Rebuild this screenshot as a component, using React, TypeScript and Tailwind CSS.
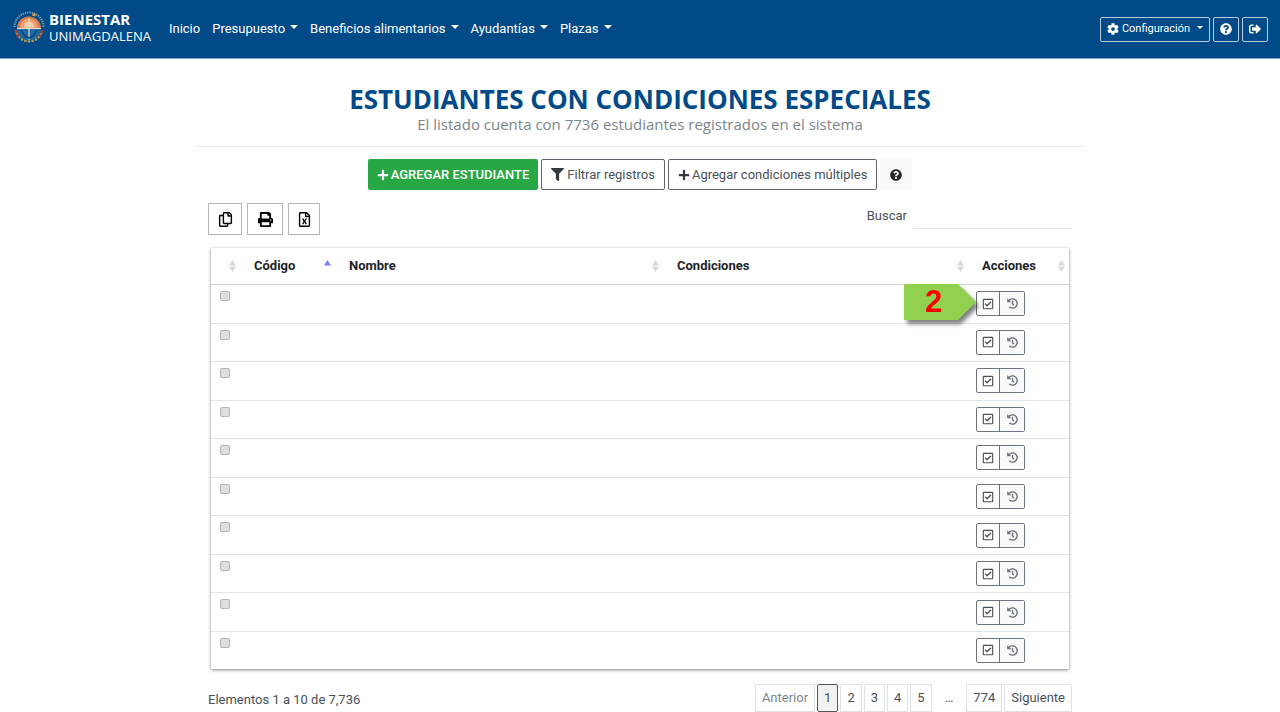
import type { ReactNode } from 'react';
import {
  FaCog,
  FaFilter,
  FaHistory,
  FaPlus,
  FaPrint,
  FaQuestionCircle,
  FaRegCheckSquare,
  FaRegCopy,
  FaRegFileExcel,
  FaSignOutAlt,
} from 'react-icons/fa';

const rows = Array.from({ length: 10 }, (_, i) => i + 1);

function Caret() {
  return (
    <span
      aria-hidden="true"
      className="mb-1 h-0 w-0 border-x-4 border-t-4 border-x-transparent border-t-current"
    />
  );
}

function Crest() {
  return (
    <svg viewBox="0 0 34 34" className="h-[34px] w-[34px]" aria-hidden="true">
      <path d="M2.500 16a14.500 14.500 0 0 1 29 0" fill="none" stroke="#8fa0b0" strokeWidth="2" strokeDasharray="1.2 1.1" />
      <path d="M5 22a13 13 0 0 0 24 0" fill="none" stroke="#c9a14a" strokeWidth="3" strokeDasharray="2.2 1.300" />
      <path d="M3.500 19a14 14 0 0 0 4 7M30.500 19a14 14 0 0 1-4 7" stroke="#b23a30" strokeWidth="2.600" strokeDasharray="3 1.500" fill="none" />
      <circle cx="17" cy="17.500" r="12" fill="#1b6aa3" />
      <path d="M5 17.500a12 12 0 0 1 24 0z" fill="#d97b4c" />
      <path d="M8 17a9 9.500 0 0 1 18 0z" fill="#ee9f6f" />
      <path d="M12 16.500a5 6 0 0 1 10 0z" fill="#f8cfae" />
      <path d="M5 17.500h24M17 7v22" stroke="#e9dcc4" strokeWidth="1.200" />
      <path d="M9 19c2 5 5 7 8 8 3-1 6-3 8-8" fill="none" stroke="#0a4379" strokeWidth="1.500" />
      <path d="M21 2l3 1-1 2.500-3-1z" fill="#e39a35" />
    </svg>
  );
}

function NavItem({ children, menu = true }: { children: ReactNode; menu?: boolean }) {
  return menu ? (
    <button type="button" className="flex items-center gap-[5px]">
      {children}
      <Caret />
    </button>
  ) : (
    <a href="#inicio">{children}</a>
  );
}

function Sort({ active = false }: { active?: boolean }) {
  return (
    <svg viewBox="0 0 7 12" className="h-3 w-[7px] shrink-0" aria-hidden="true">
      {active ? (
        <path d="M3.500 0 7 5.500H0z" fill="#7b80e6" />
      ) : (
        <path d="M3.500 0 7 5.500H0zM0 6.500h7l-3.500 5.500z" fill="#d9d9d9" />
      )}
    </svg>
  );
}

function Heading({ children, active }: { children?: ReactNode; active?: boolean }) {
  return (
    <th scope="col" className="border-b border-[#cfcfcf] pr-2 pl-2.5 text-left font-bold last:pr-1">
      <div className="flex items-center justify-between">
        <span>{children}</span>
        <Sort active={active} />
      </div>
    </th>
  );
}

function PageButton({ children, current = false }: { children: ReactNode; current?: boolean }) {
  return (
    <button
      type="button"
      aria-current={current ? 'page' : undefined}
      className={
        current
          ? 'h-7 rounded-xs border border-[#555] bg-[#f2f2f2] px-1.5'
          : 'h-7 border border-[#dee2e6] bg-white px-1.5'
      }
    >
      {children}
    </button>
  );
}

export default function App() {
  return (
    <div className="bg-white font-['Roboto',sans-serif] text-[13px] text-[#495057]">
      <header className="flex h-[59px] items-center border-b border-[#7fa3c2] bg-[#004a87] px-3 text-white">
        <a href="#inicio" className="mb-0.5 flex items-center gap-[3px]">
          <Crest />
          <span className="font-['Open_Sans',sans-serif] text-[13px] leading-[17px]">
            <strong className="block text-[15px]">BIENESTAR</strong>
            UNIMAGDALENA
          </span>
        </a>
        <nav className="ml-[18px] flex items-center gap-3">
          <NavItem menu={false}>Inicio</NavItem>
          <NavItem>Presupuesto</NavItem>
          <NavItem>Beneficios alimentarios</NavItem>
          <NavItem>Ayudantías</NavItem>
          <NavItem>Plazas</NavItem>
        </nav>
        <div className="ml-auto flex gap-[3px] text-[11px]">
          <button type="button" className="flex h-[25px] items-center gap-[3px] rounded-xs border border-[#b9cbdc] px-1.5">
            <FaCog className="size-3" />
            Configuración
            <span aria-hidden="true" className="mb-1 ml-1 border-x-[3px] border-t-[3px] border-x-transparent border-t-current" />
          </button>
          <button type="button" aria-label="Ayuda" className="flex h-[25px] w-[26px] items-center justify-center rounded-xs border border-[#b9cbdc]">
            <FaQuestionCircle className="size-3" />
          </button>
          <button type="button" aria-label="Salir" className="flex h-[25px] w-[26px] items-center justify-center rounded-xs border border-[#b9cbdc]">
            <FaSignOutAlt className="size-3" />
          </button>
        </div>
      </header>

      <main className="mx-auto max-w-[888px] pt-6">
        <div className="border-b border-[#e8e8e8] pb-3 text-center font-['Open_Sans',sans-serif]">
          <h1 className="text-[26px] leading-8 font-bold text-[#004a87]">ESTUDIANTES CON CONDICIONES ESPECIALES</h1>
          <p className="text-[15px] leading-[19px] text-[#7d858c]">
            El listado cuenta con 7736 estudiantes registrados en el sistema
          </p>
        </div>

        <div className="mt-3 flex h-[31px] justify-center gap-[3px]">
          <button type="button" className="flex items-center gap-0.5 rounded-xs bg-[#28a745] px-[9px] font-medium text-white">
            <FaPlus className="size-3" />
            AGREGAR ESTUDIANTE
          </button>
          <button type="button" className="flex items-center gap-[3px] rounded-xs border border-[#5f656b] px-[9px]">
            <FaFilter className="size-[13px] text-[#343a40]" />
            Filtrar registros
          </button>
          <button type="button" className="flex items-center gap-0.5 rounded-xs border border-[#5f656b] px-[9px]">
            <FaPlus className="size-3 text-[#343a40]" />
            Agregar condiciones múltiples
          </button>
          <button type="button" aria-label="Ayuda del listado" className="flex w-8 items-center justify-center rounded-xs bg-[#f8f9fa] text-[#212529]">
            <FaQuestionCircle className="size-3" />
          </button>
        </div>

        <div className="px-3">
          <div className="mt-[13px] flex items-start justify-between">
            <div className="flex gap-[5px] text-black">
              <button type="button" aria-label="Copiar" className="flex h-8 w-[34px] items-center justify-center border border-[#b5b5b5]">
                <FaRegCopy className="size-[15px]" />
              </button>
              <button type="button" aria-label="Imprimir" className="flex h-8 w-9 items-center justify-center border border-[#b5b5b5]">
                <FaPrint className="size-[15px]" />
              </button>
              <button type="button" aria-label="Exportar a Excel" className="flex h-8 w-8 items-center justify-center border border-[#b5b5b5]">
                <FaRegFileExcel className="size-[15px]" />
              </button>
            </div>
            <label className="flex items-center gap-1.5">
              Buscar
              <input type="search" className="h-[26px] w-[159px] border-b border-[#dee2e6] outline-none" />
            </label>
          </div>

          <div className="mx-[3px] mt-[13px] shadow-[0_1px_3px_rgba(0,0,0,0.5)]">
            <table className="h-[421px] w-full table-fixed border-separate border-spacing-0">
              <colgroup>
                <col className="w-[33px]" />
                <col className="w-[95px]" />
                <col className="w-[328px]" />
                <col />
                <col className="w-[97px]" />
              </colgroup>
              <thead>
                <tr className="h-[37px] text-[#212529]">
                  <Heading />
                  <Heading active>Código</Heading>
                  <Heading>Nombre</Heading>
                  <Heading>Condiciones</Heading>
                  <Heading>Acciones</Heading>
                </tr>
              </thead>
              <tbody>
                {rows.map((row) => (
                  <tr key={row} className="group">
                    <td className="border-b border-[#e1e4e8] pt-1.5 pl-[9px] align-top group-last:border-b-0">
                      <input
                        type="checkbox"
                        aria-label={`Seleccionar estudiante ${row}`}
                        className="block size-2.5 appearance-none rounded-xs border border-[#b4b4b4] bg-[#dedede]"
                      />
                    </td>
                    <td className="border-b border-[#e1e4e8] group-last:border-b-0" />
                    <td className="border-b border-[#e1e4e8] group-last:border-b-0" />
                    <td className="border-b border-[#e1e4e8] group-last:border-b-0" />
                    <td className="relative border-b border-[#e1e4e8] pl-1 group-last:border-b-0">
                      <div className="flex h-[25px] w-[49px] rounded-xs border border-[#6c757d]">
                        <button type="button" aria-label={`Editar condiciones ${row}`} className="flex w-[23px] items-center justify-center border-r border-[#6c757d]">
                          <FaRegCheckSquare className="size-3" />
                        </button>
                        <button type="button" aria-label={`Historial ${row}`} className="flex flex-1 items-center justify-center bg-[#f8f9fa] text-[#6c757d]">
                          <FaHistory className="size-[11px]" />
                        </button>
                      </div>
                      {row === 1 && (
                        <div className="absolute -top-px -left-[68px] h-9 w-[72px] drop-shadow-[3px_4px_2px_rgba(0,0,0,0.5)]">
                          <div className="flex h-full items-center bg-[#92d050] pl-[21px] font-['Liberation_Sans',sans-serif] text-[31px] font-bold text-[#ff0000] [clip-path:polygon(0_0,75%_0,100%_50%,75%_100%,0_100%)]">
                            2
                          </div>
                        </div>
                      )}
                    </td>
                  </tr>
                ))}
              </tbody>
            </table>
          </div>

          <div className="mt-[15px] flex items-center justify-between">
            <p className="pt-1">Elementos 1 a 10 de 7,736</p>
            <nav aria-label="Paginación" className="flex items-center gap-0.5">
              <PageButton><span className="text-[#7d858c]">Anterior</span></PageButton>
              <PageButton current>1</PageButton>
              <PageButton>2</PageButton>
              <PageButton>3</PageButton>
              <PageButton>4</PageButton>
              <PageButton>5</PageButton>
              <span className="px-[11px]">…</span>
              <PageButton>774</PageButton>
              <PageButton>Siguiente</PageButton>
            </nav>
          </div>
        </div>
      </main>
    </div>
  );
}
